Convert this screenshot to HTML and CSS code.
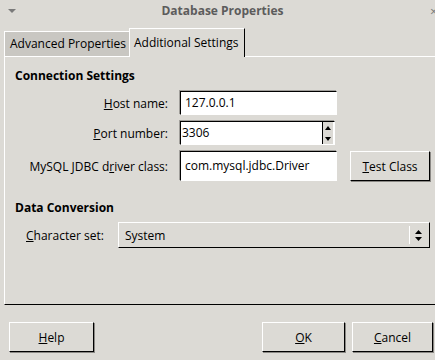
FILE: index.html
```html
<!DOCTYPE html>
<html lang="en">
<head>
    <meta charset="UTF-8">
    <title>Database Properties</title>
    <link rel="stylesheet" href="styles.css">
</head>
<body>
    <div class="window">
        <div class="titlebar">
            <span class="menu-arrow"></span>
            <span class="title">Database Properties</span>
            <span class="close">×</span>
        </div>

        <div class="tabs">
            <div class="tab">Advanced Properties</div>
            <div class="tab active">Additional Settings</div>
        </div>

        <div class="panel">
            <div class="section-title">Connection Settings</div>

            <div class="form">
                <label class="label"><u>H</u>ost name:</label>
                <div class="field host">127.0.0.1</div>
                <div></div>

                <label class="label"><u>P</u>ort number:</label>
                <div class="field port">
                    <span>3306</span>
                    <span class="spin">
                        <span class="spin-up"></span>
                        <span class="spin-down"></span>
                    </span>
                </div>
                <div></div>

                <label class="label">MySQL JDBC d<u>r</u>iver class:</label>
                <div class="field driver">com.mysql.jdbc.Driver</div>
                <button class="btn test"><u>T</u>est Class</button>
            </div>

            <div class="section-title second">Data Conversion</div>

            <div class="charset-row">
                <label class="label"><u>C</u>haracter set:</label>
                <div class="select">
                    <span>System</span>
                    <span class="select-arrows">
                        <svg width="7" height="11" viewBox="0 0 7 11">
                            <path d="M0 4 L3.5 0 L7 4 Z M0 7 L3.5 11 L7 7 Z" fill="#000"/>
                        </svg>
                    </span>
                </div>
            </div>
        </div>

        <div class="footer">
            <button class="btn help"><u>H</u>elp</button>
            <div class="right-buttons">
                <button class="btn ok"><u>O</u>K</button>
                <button class="btn cancel"><u>C</u>ancel</button>
            </div>
        </div>
    </div>
</body>
</html>
```

FILE: styles.css
```css
body {
    margin: 0;
    background: #dcdad5;
    font-family: 'Open Sans', 'Noto Sans', sans-serif;
    font-size: 12px;
    color: #000;
    overflow: hidden;
}

.window {
    width: 435px;
    height: 360px;
    overflow: hidden;
    white-space: nowrap;
}

.titlebar {
    position: relative;
    height: 20px;
    display: flex;
    justify-content: center;
    align-items: center;
}

.title {
    font-weight: bold;
    color: #5c5c5c;
    margin-left: 10px;
}

.menu-arrow {
    position: absolute;
    left: 8px;
    top: 9px;
    width: 0;
    height: 0;
    border-left: 4px solid transparent;
    border-right: 4px solid transparent;
    border-top: 4px solid #7a7a7a;
}

.close {
    position: absolute;
    left: 430px;
    top: 2px;
    color: #7a7a7a;
    font-size: 13px;
}

.tabs {
    display: flex;
    align-items: flex-end;
    margin-top: 8px;
    padding-left: 4px;
    height: 28px;
}

.tab {
    height: 25px;
    line-height: 24px;
    padding: 0 4px 0 5px;
    background: #c9c7c2;
    border-top: 1px solid #fff;
    border-left: 1px solid #fff;
    box-sizing: border-box;
    width: 125px;
}

.tab.active {
    background: #dcdad5;
    height: 29px;
    line-height: 28px;
    width: 116px;
    padding: 0 4px;
    border-right: 1px solid #000;
    margin-bottom: -1px;
    position: relative;
    z-index: 1;
}

.panel {
    margin-left: 4px;
    margin-right: -4px;
    height: 249px;
    border-top: 1px solid #fff;
    border-left: 1px solid #fff;
    border-bottom: 1px solid #000;
    padding: 9px 0 0 10px;
    box-sizing: border-box;
}

.section-title {
    font-weight: bold;
    height: 20px;
    line-height: 20px;
}

.section-title.second {
    margin-top: 17px;
}

.form {
    display: grid;
    grid-template-columns: 153px 157px 81px;
    column-gap: 12px;
    row-gap: 6px;
    margin-top: 5px;
    align-items: center;
}

.label {
    text-align: right;
}

.field {
    background: #fff;
    border: 1px solid;
    border-color: #000 #fff #fff #000;
    box-shadow: -1px -1px 0 #a09e9a;
    height: 24px;
    box-sizing: border-box;
    line-height: 22px;
    padding-left: 4px;
}

.field.port {
    display: flex;
    justify-content: space-between;
    padding-left: 1px;
    width: 155px;
}

.field.driver {
    height: 30px;
    line-height: 28px;
}

.spin {
    width: 10px;
    display: flex;
    flex-direction: column;
    border-left: 1px solid #000;
    background: #dcdad5;
    margin-right: 1px;
}

.spin-up,
.spin-down {
    flex: 1;
    display: flex;
    justify-content: center;
    align-items: center;
}

.spin-up::before {
    content: '';
    border-left: 3px solid transparent;
    border-right: 3px solid transparent;
    border-bottom: 4px solid #000;
}

.spin-down::before {
    content: '';
    border-left: 3px solid transparent;
    border-right: 3px solid transparent;
    border-top: 4px solid #000;
}

.btn {
    font-family: inherit;
    font-size: 12px;
    color: #000;
    background: #dcdad5;
    border: 1px solid;
    border-color: #fff #000 #000 #fff;
    box-shadow: 1px 1px 0 #8a8884;
    height: 30px;
    padding: 0;
    box-sizing: border-box;
}

.btn.test {
    margin-left: 1px;
}

.charset-row {
    display: flex;
    align-items: center;
    margin-top: 4px;
    padding-left: 11px;
}

.charset-row .label {
    width: 92px;
    text-align: left;
}

.select {
    flex: 0 0 312px;
    height: 26px;
    box-sizing: border-box;
    border: 1px solid;
    border-color: #fff #000 #000 #fff;
    display: flex;
    justify-content: space-between;
    align-items: center;
    padding-left: 6px;
}

.select-arrows {
    width: 16px;
    height: 18px;
    border-left: 1px solid #fff;
    display: flex;
    justify-content: center;
    align-items: center;
    margin-right: 3px;
}

.footer {
    display: flex;
    justify-content: space-between;
    padding: 17px 2px 0 9px;
}

.btn.help {
    width: 85px;
}

.right-buttons {
    display: flex;
    gap: 7px;
}

.btn.ok {
    width: 83px;
}

.btn.cancel {
    width: 81px;
}
```
